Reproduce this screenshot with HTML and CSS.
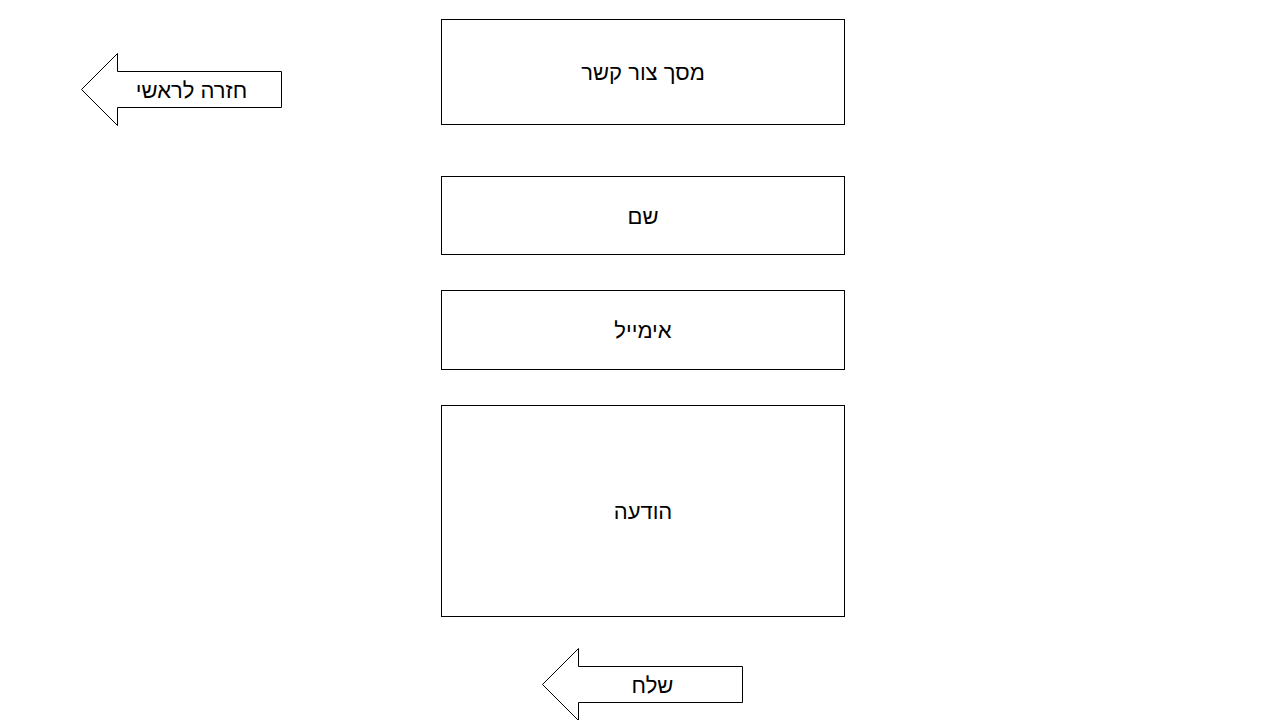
FILE: index.html
```html
<!DOCTYPE html>
<html lang="he">
<head>
<meta charset="utf-8">
<title>מסך צור קשר</title>
<link rel="stylesheet" href="styles.css">
</head>
<body>
<div class="page">
  <div class="side">
    <div class="arrow back">
      <svg class="arrow-shape" width="202" height="73" viewBox="0 0 202 73"><polygon points="0.5,36.5 36.5,0.5 36.5,18.5 200.5,18.5 200.5,54.5 36.5,54.5 36.5,72.5" fill="#fff" stroke="#000" stroke-width="1"/></svg>
      <span class="label">חזרה לראשי</span>
    </div>
  </div>
  <div class="form">
    <div class="box title">מסך צור קשר</div>
    <div class="box field">שם</div>
    <div class="box field email">אימייל</div>
    <div class="box message">הודעה</div>
    <div class="arrow send">
      <svg class="arrow-shape" width="202" height="73" viewBox="0 0 202 73"><polygon points="0.5,36.5 36.5,0.5 36.5,18.5 200.5,18.5 200.5,54.5 36.5,54.5 36.5,72.5" fill="#fff" stroke="#000" stroke-width="1"/></svg>
      <span class="label">שלח</span>
    </div>
  </div>
</div>
</body>
</html>
```

FILE: styles.css
```css
html, body {
  margin: 0;
  padding: 0;
  background: #fff;
}
body {
  font-family: "Liberation Sans", Arial, sans-serif;
  font-size: 22px;
  color: #000;
  overflow: hidden;
}
.page {
  display: flex;
  padding-top: 19px;
}
.side {
  width: 441px;
  padding-top: 34px;
  box-sizing: border-box;
}
.back {
  margin-left: 81px;
}
.form {
  width: 404px;
  display: flex;
  flex-direction: column;
}
.box {
  box-sizing: border-box;
  border: 1px solid #000;
  display: flex;
  align-items: center;
  justify-content: center;
  direction: rtl;
  padding-top: 2px;
}
.title {
  height: 106px;
}
.field {
  height: 79px;
  margin-top: 35px;
}
.title + .field {
  margin-top: 51px;
}
.email {
  height: 80px;
}
.message {
  height: 212px;
  margin-top: 35px;
}
.arrow {
  position: relative;
  width: 202px;
  height: 73px;
  display: flex;
  align-items: center;
  justify-content: center;
  padding-left: 19px;
  padding-top: 2px;
  box-sizing: border-box;
}
.send {
  margin-top: 31px;
  margin-left: 101px;
}
.arrow-shape {
  position: absolute;
  left: 0;
  top: 0;
}
.label {
  position: relative;
  direction: rtl;
}
```
